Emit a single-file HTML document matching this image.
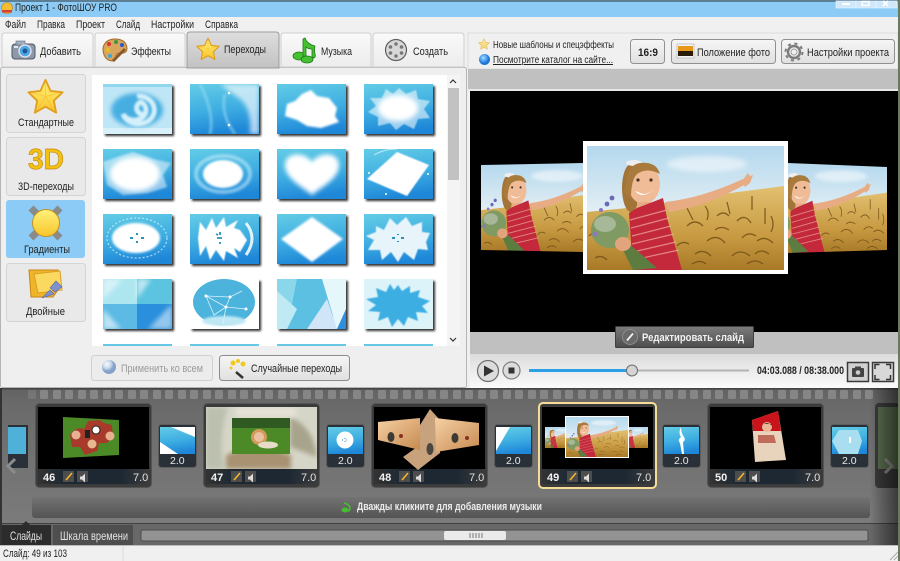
<!DOCTYPE html>
<html><head><meta charset="utf-8"><style>
html,body{margin:0;padding:0;background:#f0f0f0;width:900px;height:561px;overflow:hidden}
svg{display:block}
text{font-family:"Liberation Sans","DejaVu Sans",sans-serif;font-size:11px;fill:#222}
.b{font-weight:bold}
</style></head><body>
<svg width="900" height="561" viewBox="0 0 900 561" xmlns="http://www.w3.org/2000/svg">
<defs>
<linearGradient id="tab" x1="0" y1="0" x2="0" y2="1"><stop offset="0" stop-color="#fafafa"/><stop offset="1" stop-color="#ececec"/></linearGradient>
<linearGradient id="tabA" x1="0" y1="0" x2="0" y2="1"><stop offset="0" stop-color="#dedede"/><stop offset="1" stop-color="#c2c2c2"/></linearGradient>
<linearGradient id="btn" x1="0" y1="0" x2="0" y2="1"><stop offset="0" stop-color="#f6f6f6"/><stop offset="1" stop-color="#e0e0e0"/></linearGradient>
<linearGradient id="blue" x1="0.1" y1="0" x2="0.3" y2="1"><stop offset="0" stop-color="#62cbe6"/><stop offset="0.55" stop-color="#3eaee2"/><stop offset="1" stop-color="#1f87d8"/></linearGradient>
<linearGradient id="gold" x1="0" y1="0" x2="0" y2="1"><stop offset="0" stop-color="#fff27a"/><stop offset="1" stop-color="#f8c52c"/></linearGradient>
<linearGradient id="ctrl" x1="0" y1="0" x2="0" y2="1"><stop offset="0" stop-color="#dcdcdc"/><stop offset="1" stop-color="#fbfbfb"/></linearGradient>
<linearGradient id="edit" x1="0" y1="0" x2="0" y2="1"><stop offset="0" stop-color="#7c7c7c"/><stop offset="1" stop-color="#4c4c4c"/></linearGradient>
<linearGradient id="sky" x1="0" y1="0" x2="0" y2="1"><stop offset="0" stop-color="#b4d8ee"/><stop offset=".6" stop-color="#e8f1f4"/><stop offset="1" stop-color="#eef3f2"/></linearGradient>
<linearGradient id="wheat" x1="0" y1="0" x2="0" y2="1"><stop offset="0" stop-color="#e2c070"/><stop offset=".6" stop-color="#c89a42"/><stop offset="1" stop-color="#a87a28"/></linearGradient>
<linearGradient id="tl" x1="0" y1="0" x2="0" y2="1"><stop offset="0" stop-color="#626262"/><stop offset="0.12" stop-color="#6a6a6a"/><stop offset="1" stop-color="#7b7b7b"/></linearGradient>
<linearGradient id="mus" x1="0" y1="0" x2="0" y2="1"><stop offset="0" stop-color="#737373"/><stop offset="1" stop-color="#545454"/></linearGradient>
<linearGradient id="rgt" x1="0" y1="0" x2="1" y2="0"><stop offset="0" stop-color="#000" stop-opacity="0"/><stop offset="1" stop-color="#000" stop-opacity=".55"/></linearGradient>
<linearGradient id="bar" x1="0" y1="0" x2="1" y2="0"><stop offset="0" stop-color="#333"/><stop offset=".25" stop-color="#1d2833"/><stop offset=".75" stop-color="#1d2833"/><stop offset="1" stop-color="#3c3c3c"/></linearGradient>
<linearGradient id="warm" x1="0" y1="0" x2="1" y2="1"><stop offset="0" stop-color="#f6d0a4"/><stop offset="1" stop-color="#c68a50"/></linearGradient>
<radialGradient id="ball" cx=".35" cy=".3"><stop offset="0" stop-color="#fff"/><stop offset=".6" stop-color="#bcd2e8"/><stop offset="1" stop-color="#6c8fc0"/></radialGradient>
<radialGradient id="globe" cx=".4" cy=".35"><stop offset="0" stop-color="#9fe0ff"/><stop offset="1" stop-color="#1e74d8"/></radialGradient>
<filter id="b1" x="-20%" y="-20%" width="140%" height="140%"><feGaussianBlur stdDeviation="1"/></filter>
<filter id="b2" x="-30%" y="-30%" width="160%" height="160%"><feGaussianBlur stdDeviation="2.4"/></filter>
<filter id="b05"><feGaussianBlur stdDeviation=".45"/></filter>
<clipPath id="tc"><rect width="69" height="50"/></clipPath>
<clipPath id="pc"><rect width="197" height="124"/></clipPath>

<symbol id="star" viewBox="0 0 40 40"><polygon points="20,2 25.5,14 38.5,15.5 29,24.5 31.5,37.5 20,31 8.5,37.5 11,24.5 1.5,15.5 14.5,14" fill="url(#gold)" stroke="#e29f1e" stroke-width="2" stroke-linejoin="round"/><path d="M20 6 20 20 M6 16 20 20 M12 33 20 20 M28 33 20 20 M34 16 20 20" stroke="#f4b92c" stroke-width=".8" opacity=".7"/></symbol>

<symbol id="photo" viewBox="0 0 197 124" preserveAspectRatio="none"><g clip-path="url(#pc)">
<rect width="197" height="124" fill="url(#sky)"/>
<ellipse cx="120" cy="18" rx="40" ry="8" fill="#fff" opacity=".5" filter="url(#b2)"/>
<path d="M0 66 60 60 120 50 197 40V124H0Z" fill="url(#wheat)"/>
<g stroke="#6e4c14" stroke-width="1.300" fill="none" opacity=".8"><path d="M100 80q8-8 16 0M120 95q10-8 18 2M150 75q8-8 14 2M170 95q8-6 16 2M130 70q6-6 12 0M108 108q8-6 16 2M145 110q8-8 18 0M178 62v16M165 50v14M184 70q4 8 0 16M118 60q5 6 2 14M90 100q5-6 12-2M155 92q6-7 14-2M100 62l6 12M140 56l3 12M128 84q6-5 14 0M105 118q8-5 14 0M160 118q8-6 16 0"/><path d="M2 90q6-6 12 0M8 112q6-4 12 2M168 108q6-6 14 0"/></g>
<path d="M78 56 Q115 52 156 33 L159 38 Q120 60 82 66Z" fill="#e8ac84"/>
<path d="M155 35l6-8 2 3 3-1-3 8-5 4Z" fill="#e8ac84"/>
<ellipse cx="44" cy="42" rx="9" ry="24" fill="#a27438"/>
<ellipse cx="47" cy="17" rx="8" ry="3" fill="#eee"/>
<ellipse cx="57" cy="38" rx="16" ry="20" fill="#f0bc98"/>
<path d="M40 30Q44 15 60 17Q70 18 73 28Q60 21 50 28Q44 34 44 52L37 46Z" fill="#a87a3c"/>
<path d="M48 45Q56 54 67 43Q62 48 56 48Z" fill="#fff"/>
<circle cx="51" cy="34" r="1.600" fill="#432"/><circle cx="64" cy="34" r="1.600" fill="#432"/>
<path d="M50 56h14l-3 8H50Z" fill="#e8ac84"/>
<path d="M42 67 50 62 76 52 80 72 95 124H46Z" fill="#c3293a"/>
<g stroke="#f0b0a8" stroke-width="1.200" opacity=".7"><path d="M43 74 80 64M44 82 82 72M45 90 84 80M45 98 87 88M46 106 89 96M46 114 92 104"/></g>
<ellipse cx="23" cy="84" rx="19" ry="18" fill="#7f9a62"/><ellipse cx="18" cy="78" rx="11" ry="8" fill="#a6b898"/><circle cx="20" cy="58" r="2.400" fill="#6a68b8"/><circle cx="25" cy="52" r="2.400" fill="#6a68b8"/><circle cx="8" cy="88" r="2.400" fill="#8a78c0"/><circle cx="14" cy="64" r="2" fill="#8a78c0"/>
<path d="M40 96 70 122 46 124 34 100Z" fill="#5c7c40"/>
<ellipse cx="36" cy="98" rx="8" ry="7" fill="#e2a47c"/>
</g></symbol>

<symbol id="slide" viewBox="0 0 117 85"><rect x=".5" y=".5" width="116" height="84" rx="4" fill="#3b3b3b" stroke="#555"/><rect x="3" y="4" width="111" height="62" fill="#000"/><rect x="3" y="66" width="111" height="15" fill="url(#bar)"/>
<rect x="28" y="68" width="11" height="11" fill="#4d4d4d"/><path d="M31 77 37 70" stroke="#f0b830" stroke-width="1.600"/>
<rect x="42" y="68" width="11" height="11" fill="#4d4d4d"/><path d="M45 73.500h2l3-3v9l-3-3h-2Z" fill="#ddd"/></symbol>

<symbol id="trans" viewBox="0 0 39 44"><rect x=".5" y=".5" width="38" height="43" rx="3" fill="#2a3038" stroke="#5e5e5e"/><rect x="2" y="3" width="35" height="27" fill="url(#blue)"/></symbol>
</defs>

<!-- window -->
<rect width="900" height="561" fill="#f0f0f0"/>
<rect width="900" height="17" fill="#8bcbf5"/>
<rect width="900" height="2" fill="#5d7f96"/>
<circle cx="7" cy="8" r="5.500" fill="#f4bc30" stroke="#c08018" stroke-width=".6"/><rect x="2" y="10" width="10" height="2.500" fill="#d8402c"/>
<text x="15" y="11" textLength="102" lengthAdjust="spacingAndGlyphs">Проект 1 - ФотоШОУ PRO</text>
<g fill="#cfe8fa" stroke="#e8f5ff" stroke-width=".6"><rect x="836" y="1" width="20" height="7"/><rect x="856" y="1" width="20" height="7"/><rect x="876" y="1" width="21" height="7"/></g>
<path d="M842 4h8" stroke="#fff" stroke-width="2"/><rect x="862" y="1.500" width="7" height="4" fill="none" stroke="#fff" stroke-width="1.400"/><path d="M883 1l5 5M888 1l-5 5" stroke="#fff" stroke-width="1.600"/>
<rect y="17" width="900" height="16" fill="#f0f0f0"/>
<g fill="#222">
<text x="5" y="28" textLength="21" lengthAdjust="spacingAndGlyphs">Файл</text>
<text x="37" y="28" textLength="28" lengthAdjust="spacingAndGlyphs">Правка</text>
<text x="76" y="28" textLength="29" lengthAdjust="spacingAndGlyphs">Проект</text>
<text x="116" y="28" textLength="24" lengthAdjust="spacingAndGlyphs">Слайд</text>
<text x="151" y="28" textLength="43" lengthAdjust="spacingAndGlyphs">Настройки</text>
<text x="205" y="28" textLength="33" lengthAdjust="spacingAndGlyphs">Справка</text>
</g>

<!-- left panel -->
<rect x="0.500" y="67.500" width="466" height="320" rx="2" fill="#efefef" stroke="#b4b4b4"/>
<path d="M2 67V36q0-3 3-3h85q3 0 3 3V67Z" fill="url(#tab)" stroke="#cfcfcf"/>
<path d="M95 67V36q0-3 3-3h84q3 0 3 3V67Z" fill="url(#tab)" stroke="#cfcfcf"/>
<path d="M281 67V36q0-3 3-3h84q3 0 3 3V67Z" fill="url(#tab)" stroke="#cfcfcf"/>
<path d="M373 67V36q0-3 3-3h85q3 0 3 3V67Z" fill="url(#tab)" stroke="#cfcfcf"/>
<path d="M187 68V35q0-3 3-3h86q3 0 3 3V68Z" fill="url(#tabA)" stroke="#9c9c9c"/>
<!-- camera -->
<rect x="12" y="44" width="23" height="15" rx="3" fill="#8c9aa8" stroke="#556"/><rect x="16" y="41" width="9" height="4" fill="#9fb0be" stroke="#667" stroke-width=".6"/><circle cx="25" cy="51" r="6" fill="#4ca8e4" stroke="#dde" stroke-width="1.500"/><circle cx="25" cy="51" r="2.500" fill="#1a5a98"/><rect x="14" y="46" width="4" height="2" fill="#dfe8ee"/>
<!-- palette -->
<path d="M103 48q2-9 12-9q11 0 12 9q0 6-7 5q-4 0-4 3q1 5-4 5q-9-1-9-13Z" fill="#d8a55e" stroke="#a06c28"/>
<circle cx="109" cy="44" r="2" fill="#e23030"/><circle cx="116" cy="42" r="2" fill="#3a9a3a"/><circle cx="122" cy="45" r="2" fill="#2a5ad0"/><circle cx="108" cy="50" r="2" fill="#e8c020"/><circle cx="110" cy="56" r="2" fill="#3aa8d8"/>
<path d="M112 60l12-12 2 2-12 12Z" fill="#8a5828"/>
<use href="#star" x="196" y="37" width="24" height="24"/>
<!-- music -->
<g fill="#44c030" stroke="#1e7a18" stroke-width=".8"><ellipse cx="299" cy="56" rx="6" ry="4"/><ellipse cx="307" cy="59.500" rx="6" ry="3.500"/><path d="M303 56V39l2-1q2 6 10 8q-1 3 0 8q1 3-1 4l-2-1V49q-4 0-6-2V56Z"/></g>
<!-- reel -->
<circle cx="396" cy="50" r="10.500" fill="#d8d8d8" stroke="#5e5e5e" stroke-width="1.200"/><g fill="#777"><circle cx="396" cy="44" r="1.800"/><circle cx="396" cy="56" r="1.800"/><circle cx="390.500" cy="47" r="1.800"/><circle cx="401.500" cy="47" r="1.800"/><circle cx="390.500" cy="53" r="1.800"/><circle cx="401.500" cy="53" r="1.800"/></g>
<text x="40" y="55" textLength="41" lengthAdjust="spacingAndGlyphs">Добавить</text>
<text x="131" y="55" textLength="40" lengthAdjust="spacingAndGlyphs">Эффекты</text>
<text x="224" y="53" textLength="42" lengthAdjust="spacingAndGlyphs">Переходы</text>
<text x="321" y="55" textLength="31" lengthAdjust="spacingAndGlyphs">Музыка</text>
<text x="413" y="55" textLength="35" lengthAdjust="spacingAndGlyphs">Создать</text>

<!-- sidebar -->
<rect x="6.500" y="74.500" width="79" height="58" rx="3" fill="#e9e9e9" stroke="#d4d4d4"/>
<rect x="6.500" y="137.500" width="79" height="58" rx="3" fill="#e9e9e9" stroke="#d4d4d4"/>
<rect x="6" y="200" width="79" height="58" rx="3" fill="#8bcbf5"/>
<rect x="6.500" y="263.500" width="79" height="58" rx="3" fill="#e9e9e9" stroke="#d4d4d4"/>
<use href="#star" x="27" y="78" width="37" height="37"/>
<text x="28" y="169" class="b" style="font-size:29px;fill:#f2c212;stroke:#c98a10;stroke-width:.7" textLength="36" lengthAdjust="spacingAndGlyphs">3D</text>
<g><path d="M31 208l8 8M60 208l-8 8M31 238l8-8M60 238l-8-8" stroke="#8a8a8a" stroke-width="7"/><circle cx="46" cy="223" r="13.500" fill="url(#gold)" stroke="#c8901a" stroke-width="1"/></g>
<path d="M29 270H58L60 287 53 297H31Z" fill="#f0b428" stroke="#c8861a"/><path d="M34 274 60 271 62 290 38 293Z" fill="#fbd860" stroke="#d8a028"/><path d="M42 298l8-8 4 4Z M50 288l6-7 6 6-7 5Z" fill="#7f92d0" stroke="#5468a8" stroke-width=".6"/>
<text x="18" y="126" textLength="56" lengthAdjust="spacingAndGlyphs">Стандартные</text>
<text x="18" y="190" textLength="56" lengthAdjust="spacingAndGlyphs">3D-переходы</text>
<text x="24" y="253" textLength="46" lengthAdjust="spacingAndGlyphs">Градиенты</text>
<text x="26" y="315" textLength="39" lengthAdjust="spacingAndGlyphs">Двойные</text>

<!-- grid -->
<rect x="92" y="75" width="368" height="271" fill="#fff"/>
<g fill="#111" filter="url(#b1)" opacity=".85"><rect x="105" y="86" width="69" height="50"/><rect x="192" y="86" width="69" height="50"/><rect x="279" y="86" width="69" height="50"/><rect x="366" y="86" width="69" height="50"/><rect x="105" y="151" width="69" height="50"/><rect x="192" y="151" width="69" height="50"/><rect x="279" y="151" width="69" height="50"/><rect x="366" y="151" width="69" height="50"/><rect x="105" y="216" width="69" height="50"/><rect x="192" y="216" width="69" height="50"/><rect x="279" y="216" width="69" height="50"/><rect x="366" y="216" width="69" height="50"/><rect x="105" y="281" width="69" height="50"/><rect x="192" y="281" width="69" height="50"/><rect x="279" y="281" width="69" height="50"/><rect x="366" y="281" width="69" height="50"/></g>

<!-- row 1 -->
<g transform="translate(103 84)" clip-path="url(#tc)"><rect width="69" height="50" fill="#bfe6f6"/><ellipse cx="34" cy="26" rx="26" ry="17" fill="#46aee2" filter="url(#b2)"/><path d="M34 12a16 14 0 1 1-14 18a12 10 0 1 0 18-12a6 6 0 1 0 4 12" fill="none" stroke="#d4f0fb" stroke-width="5" filter="url(#b1)"/><rect width="69" height="3" fill="#7ccfe8" opacity=".7"/><rect y="44" width="69" height="6" fill="#fff" opacity=".4"/></g>
<g transform="translate(190 84)" clip-path="url(#tc)"><rect width="69" height="50" fill="url(#blue)"/><path d="M30 0H69V50H60Q62 25 50 15Q40 8 30 0Z" fill="#fff" opacity=".65" filter="url(#b2)"/><path d="M10 0Q25 30 20 50M35 10Q30 30 45 50" stroke="#9fe0f4" stroke-width="3" fill="none" opacity=".5" filter="url(#b1)"/><circle cx="39" cy="9" r="1.300" fill="#fff"/><circle cx="39" cy="41" r="1.300" fill="#fff"/></g>
<g transform="translate(277 84)" clip-path="url(#tc)"><rect width="69" height="50" fill="url(#blue)"/><path d="M10 20 18 17 25 10 34 6 40 12 52 14 60 24 58 32 62 38 44 44 30 42 20 36 8 32Z" fill="#fff" filter="url(#b1)"/></g>
<g transform="translate(364 84)" clip-path="url(#tc)"><rect width="69" height="50" fill="url(#blue)"/><path d="M35 4 42 10 52 6 54 15 66 17 60 25 66 34 54 35 50 45 40 40 32 46 26 39 14 42 14 33 4 28 12 22 6 14 18 14 22 5 29 10Z" fill="#fff" opacity=".55" filter="url(#b05)"/><ellipse cx="34" cy="24" rx="20" ry="13" fill="#fff" filter="url(#b2)"/></g>
<!-- row 2 -->
<g transform="translate(103 149)" clip-path="url(#tc)"><rect width="69" height="50" fill="url(#blue)"/><path d="M0 13 14 8 30 3 50 10 68 14 60 26 64 38 45 44 20 46 4 36Z" fill="#fff" opacity=".5" filter="url(#b1)"/><ellipse cx="32" cy="25" rx="25" ry="17" fill="#fff" filter="url(#b2)"/></g>
<g transform="translate(190 149)" clip-path="url(#tc)"><rect width="69" height="50" fill="url(#blue)"/><ellipse cx="33" cy="25" rx="27" ry="18" fill="none" stroke="#d4f2fb" stroke-width="4" opacity=".5" filter="url(#b1)"/><ellipse cx="33" cy="25" rx="20" ry="14" fill="#fff" filter="url(#b1)"/></g>
<g transform="translate(277 149)" clip-path="url(#tc)"><rect width="69" height="50" fill="url(#blue)"/><path d="M35 13C28 2 8 3 8 16C8 30 26 38 35 46C44 38 62 30 62 16C62 3 42 2 35 13Z" fill="#fff" filter="url(#b2)"/></g>
<g transform="translate(364 149)" clip-path="url(#tc)"><rect width="69" height="50" fill="url(#blue)"/><path d="M33 3 65 16 43 47 3 30Z" fill="#fff" filter="url(#b05)"/><path d="M10 6Q20 0 33 0" stroke="#bfeaf7" fill="none"/><circle cx="5" cy="24" r="1" fill="#fff"/><circle cx="64" cy="25" r="1" fill="#fff"/><circle cx="22" cy="45" r="1" fill="#fff"/></g>
<!-- row 3 -->
<g transform="translate(103 214)" clip-path="url(#tc)"><rect width="69" height="50" fill="url(#blue)"/><ellipse cx="34" cy="24" rx="30" ry="20" fill="none" stroke="#e4f7fc" stroke-width="1.200" stroke-dasharray="2 2" opacity=".7"/><ellipse cx="33" cy="24" rx="24" ry="15" fill="#fff" filter="url(#b1)"/><path d="M34 19v2M34 27v2M27 24h3M38 24h3" stroke="#2c90b8" stroke-width="2"/></g>
<g transform="translate(190 214)" clip-path="url(#tc)"><rect width="69" height="50" fill="url(#blue)"/><path d="M8 24 10 8 16 16 22 4 26 14 34 3 36 13 48 6 44 14 50 16 57 26 50 38 44 34 48 44 36 37 34 47 26 36 20 46 16 32 10 42Z" fill="#fff" filter="url(#b05)"/><path d="M56 9Q68 24 56 41" stroke="#fff" stroke-width="3" fill="none" opacity=".85"/><path d="M27 24h5M26 20l2 1M30 18v3M30 28v2" stroke="#2c90b8" stroke-width="1.800"/></g>
<g transform="translate(277 214)" clip-path="url(#tc)"><rect width="69" height="50" fill="url(#blue)"/><path d="M35 3 66 25 35 48 4 25Z" fill="#fff" filter="url(#b1)"/></g>
<g transform="translate(364 214)" clip-path="url(#tc)"><rect width="69" height="50" fill="url(#blue)"/><path d="M12 12 20 16 26 4 33 11 42 3 48 12 58 8 58 18 66 19 62 28 64 36 54 35 50 46 40 38 34 48 27 38 18 46 16 36 4 36 10 26 2 22 12 18Z" fill="#e7f5fb" filter="url(#b05)"/><path d="M34 20v1M34 27v1M28 24h3M37 24h3" stroke="#2c90b8" stroke-width="2"/></g>
<!-- row 4 -->
<g transform="translate(103 279)" clip-path="url(#tc)"><rect width="34" height="25" fill="#aee6f0"/><rect x="34" width="35" height="25" fill="#5cc4e0"/><rect y="25" width="34" height="25" fill="#5cbae4"/><rect x="34" y="25" width="35" height="25" fill="#2a8fdc"/><path d="M0 0H20L0 20ZM69 25V50H45Z" fill="#fff" opacity=".5" filter="url(#b2)"/><path d="M0 50V30L18 50ZM34 0 34 20 48 0Z" fill="#fff" opacity=".6" filter="url(#b2)"/></g>
<g transform="translate(190 279)" clip-path="url(#tc)"><rect width="69" height="50" fill="#fff"/><ellipse cx="34" cy="23" rx="31" ry="23" fill="#4cb4dc"/><ellipse cx="34" cy="42" rx="22" ry="5" fill="#bfe8f4" filter="url(#b1)"/><path d="M16 17 40 18 52 12M16 17 36 28 56 30M36 28 33 45M40 18 36 28M16 17 24 36 36 28" stroke="#d8f2fb" fill="none" stroke-width=".8"/><g fill="#fff"><circle cx="16" cy="17" r="1.500"/><circle cx="40" cy="18" r="1.500"/><circle cx="36" cy="28" r="1.500"/><circle cx="56" cy="30" r="1.500"/></g></g>
<g transform="translate(277 279)" clip-path="url(#tc)"><rect width="69" height="50" fill="#d5f0f8"/><path d="M0 0H69V5L50 50H0Z" fill="#8ad6ea"/><path d="M20 0H50L58 50H10Z" fill="#5cc0e2"/><path d="M45 0H69V50H60Z" fill="#e6f7fb"/><path d="M0 12 20 30 10 50H0Z" fill="#bfeaf4"/><path d="M30 50 50 20 60 50Z" fill="#d0e6f8"/><path d="M60 50 69 30V50Z" fill="#2e90dc"/></g>
<g transform="translate(364 279)" clip-path="url(#tc)"><rect width="69" height="50" fill="#ddf3fa"/><path d="M34 6 38 12 46 7 46 14 56 11 54 18 66 22 58 27 64 34 52 33 54 42 44 38 40 47 34 40 28 48 24 38 14 42 16 33 4 32 12 26 2 20 14 18 12 9 22 13 26 5 30 11Z" fill="#3eaee2" filter="url(#b05)"/></g>
<!-- row 5 clipped -->
<g fill="#66c8e4"><rect x="103" y="344" width="69" height="2"/><rect x="190" y="344" width="69" height="2"/><rect x="277" y="344" width="69" height="2"/><rect x="364" y="344" width="69" height="2"/></g>

<!-- scrollbar -->
<rect x="447" y="75" width="13" height="271" fill="#f4f4f4"/>
<rect x="448" y="88" width="11" height="92" fill="#c2c2c2"/>
<path d="M450 83l3-3 3 3M450 338l3 3 3-3" fill="none" stroke="#333" stroke-width="1.200"/>

<!-- apply buttons -->
<rect x="91.500" y="355.500" width="121" height="25" rx="3" fill="#ececec" stroke="#cfcfcf"/>
<rect x="219.500" y="355.500" width="130" height="25" rx="3" fill="url(#btn)" stroke="#8c8c8c"/>
<circle cx="109" cy="367" r="7" fill="url(#ball)" opacity=".8"/>
<text x="121" y="372" style="fill:#9a9a9a" textLength="82" lengthAdjust="spacingAndGlyphs">Применить ко всем</text>
<g><path d="M236 372l7 6" stroke="#333" stroke-width="2.500"/><circle cx="233" cy="363" r="2.500" fill="#f2c820"/><circle cx="238" cy="361" r="2" fill="#f2c820"/><circle cx="243" cy="364" r="2.500" fill="#f2c820"/><circle cx="231" cy="368" r="1.500" fill="#f2c820"/></g>
<text x="251" y="372" textLength="91" lengthAdjust="spacingAndGlyphs">Случайные переходы</text>

<!-- right top -->
<rect x="468" y="33" width="430" height="36" fill="#f0f0f0" stroke="#dcdcdc"/>
<rect x="468" y="69" width="430" height="20" fill="#c0c0c0"/>
<rect x="468" y="89" width="430" height="2" fill="#e8e8e8"/>
<use href="#star" x="478" y="38" width="12" height="12" opacity=".65"/>
<circle cx="484.500" cy="59.500" r="5.500" fill="url(#globe)"/>
<text x="493" y="48" style="font-size:10px" textLength="121" lengthAdjust="spacingAndGlyphs">Новые шаблоны и спецэффекты</text>
<text x="493" y="63" style="font-size:10px" text-decoration="underline" textLength="120" lengthAdjust="spacingAndGlyphs">Посмотрите каталог на сайте...</text>
<rect x="630.500" y="39.500" width="34" height="24" rx="3" fill="url(#btn)" stroke="#909090"/>
<rect x="671.500" y="39.500" width="104" height="24" rx="3" fill="url(#btn)" stroke="#909090"/>
<rect x="781.500" y="39.500" width="113" height="24" rx="3" fill="url(#btn)" stroke="#909090"/>
<text x="638" y="56" class="b" textLength="20" lengthAdjust="spacingAndGlyphs">16:9</text>
<rect x="677" y="44" width="17" height="14" fill="#f4f4f4" stroke="#aaa" stroke-width=".6"/><rect x="678" y="46" width="15" height="5" fill="#e89818"/><rect x="678" y="51" width="15" height="5" fill="#2a1a08"/>
<text x="697" y="56" textLength="73" lengthAdjust="spacingAndGlyphs">Положение фото</text>
<circle cx="794" cy="52" r="6" fill="none" stroke="#7c7c7c" stroke-width="2.400"/><circle cx="794" cy="52" r="8.500" fill="none" stroke="#7c7c7c" stroke-width="2" stroke-dasharray="3 3.700"/><circle cx="794" cy="52" r="3" fill="#f0f0f0" stroke="#888" stroke-width=".7"/>
<text x="807" y="56" textLength="82" lengthAdjust="spacingAndGlyphs">Настройки проекта</text>

<!-- preview -->
<rect x="470" y="91" width="428" height="241" fill="#000"/>
<svg x="481" y="163" width="102" height="89" viewBox="0 0 102 89"><use href="#photo" x="-2" y="0" width="128" height="89"/></svg>
<svg x="788" y="163" width="99" height="90" viewBox="0 0 99 90"><use href="#photo" x="-25" y="0" width="128" height="90"/></svg>
<path d="M481 163H583L481 165Z" fill="#000"/><path d="M481 250 583 252H481Z" fill="#000"/>
<path d="M788 163H887V167Z" fill="#000"/><path d="M788 253H887V250Z" fill="#000"/>
<rect x="583" y="141" width="205" height="133" fill="#fff"/>
<use href="#photo" x="587" y="146" width="197" height="124"/>

<!-- controls -->
<rect x="470" y="332" width="428" height="22" fill="#c0c0c0"/>
<rect x="470" y="354" width="428" height="34" fill="url(#ctrl)"/>
<rect x="615.500" y="326.500" width="138" height="21" rx="1" fill="url(#edit)" stroke="#3f3f3f"/>
<circle cx="630" cy="337" r="7.500" fill="#6a6a6a" stroke="#999" stroke-width=".7"/><path d="M627 340.500 633 333.500" stroke="#f2f2f2" stroke-width="1.800"/>
<text x="642" y="341" class="b" style="fill:#f2f2f2" textLength="102" lengthAdjust="spacingAndGlyphs">Редактировать слайд</text>
<circle cx="488" cy="371" r="10.500" fill="#dcdcdc" stroke="#6e6e6e" stroke-width="1.200"/><path d="M484 365.500 494 371 484 376.500Z" fill="#333"/>
<circle cx="511.500" cy="370.500" r="8.500" fill="#dcdcdc" stroke="#7e7e7e" stroke-width="1.200"/><rect x="508.500" y="367.500" width="6" height="6" fill="#333"/>
<rect x="529" y="369.500" width="220" height="2" fill="#b4b4b4"/>
<rect x="529" y="369" width="103" height="3" fill="#2ba0e6"/>
<circle cx="632" cy="370.500" r="5.500" fill="#d4d4d4" stroke="#6c6c6c"/>
<text x="757" y="374" class="b" textLength="87" lengthAdjust="spacingAndGlyphs">04:03.088 / 08:38.000</text>
<rect x="847.500" y="362.500" width="21" height="19" fill="#d0d0d0" stroke="#3a3a3a" stroke-width="1.500"/>
<rect x="852" y="368" width="12" height="9" rx="1" fill="#444"/><rect x="855" y="366.500" width="6" height="2" fill="#444"/><circle cx="858" cy="372.500" r="2.300" fill="#ccc"/>
<rect x="872.500" y="362.500" width="21" height="19" fill="#d8d8d8" stroke="#3a3a3a" stroke-width="1.500"/>
<path d="M875 369v-4.500h4.500M886 364.500h4.500v4.500M890.500 375v4.500H886M879.500 379.500H875V375" fill="none" stroke="#333" stroke-width="1.500"/>

<!-- timeline -->
<rect y="388" width="900" height="136" fill="url(#tl)"/>
<rect y="388" width="900" height="1.500" fill="#444"/>
<g fill="#868686"><rect x="28" y="390" width="8" height="9" rx="1.500" opacity=".5"/><rect x="40" y="390" width="8" height="9" rx="1.500"/><rect x="53" y="390" width="8" height="9" rx="1.500"/><rect x="65" y="390" width="8" height="9" rx="1.500"/><rect x="78" y="390" width="8" height="9" rx="1.500"/><rect x="90" y="390" width="8" height="9" rx="1.500"/><rect x="103" y="390" width="8" height="9" rx="1.500"/><rect x="115" y="390" width="8" height="9" rx="1.500"/><rect x="128" y="390" width="8" height="9" rx="1.500"/><rect x="140" y="390" width="8" height="9" rx="1.500"/><rect x="153" y="390" width="8" height="9" rx="1.500"/><rect x="165" y="390" width="8" height="9" rx="1.500"/><rect x="178" y="390" width="8" height="9" rx="1.500"/><rect x="190" y="390" width="8" height="9" rx="1.500"/><rect x="203" y="390" width="8" height="9" rx="1.500"/><rect x="215" y="390" width="8" height="9" rx="1.500"/><rect x="228" y="390" width="8" height="9" rx="1.500"/><rect x="240" y="390" width="8" height="9" rx="1.500"/><rect x="253" y="390" width="8" height="9" rx="1.500"/><rect x="265" y="390" width="8" height="9" rx="1.500"/><rect x="278" y="390" width="8" height="9" rx="1.500"/><rect x="290" y="390" width="8" height="9" rx="1.500"/><rect x="303" y="390" width="8" height="9" rx="1.500"/><rect x="315" y="390" width="8" height="9" rx="1.500"/><rect x="328" y="390" width="8" height="9" rx="1.500"/><rect x="340" y="390" width="8" height="9" rx="1.500"/><rect x="353" y="390" width="8" height="9" rx="1.500"/><rect x="365" y="390" width="8" height="9" rx="1.500"/><rect x="378" y="390" width="8" height="9" rx="1.500"/><rect x="390" y="390" width="8" height="9" rx="1.500"/><rect x="403" y="390" width="8" height="9" rx="1.500"/><rect x="415" y="390" width="8" height="9" rx="1.500"/><rect x="428" y="390" width="8" height="9" rx="1.500"/><rect x="440" y="390" width="8" height="9" rx="1.500"/><rect x="453" y="390" width="8" height="9" rx="1.500"/><rect x="465" y="390" width="8" height="9" rx="1.500"/><rect x="478" y="390" width="8" height="9" rx="1.500"/><rect x="490" y="390" width="8" height="9" rx="1.500"/><rect x="503" y="390" width="8" height="9" rx="1.500"/><rect x="515" y="390" width="8" height="9" rx="1.500"/><rect x="528" y="390" width="8" height="9" rx="1.500"/><rect x="540" y="390" width="8" height="9" rx="1.500"/><rect x="553" y="390" width="8" height="9" rx="1.500"/><rect x="565" y="390" width="8" height="9" rx="1.500"/><rect x="578" y="390" width="8" height="9" rx="1.500"/><rect x="590" y="390" width="8" height="9" rx="1.500"/><rect x="603" y="390" width="8" height="9" rx="1.500"/><rect x="615" y="390" width="8" height="9" rx="1.500"/><rect x="628" y="390" width="8" height="9" rx="1.500"/><rect x="640" y="390" width="8" height="9" rx="1.500"/><rect x="653" y="390" width="8" height="9" rx="1.500"/><rect x="665" y="390" width="8" height="9" rx="1.500"/><rect x="678" y="390" width="8" height="9" rx="1.500"/><rect x="690" y="390" width="8" height="9" rx="1.500"/><rect x="703" y="390" width="8" height="9" rx="1.500"/><rect x="715" y="390" width="8" height="9" rx="1.500"/><rect x="728" y="390" width="8" height="9" rx="1.500"/><rect x="740" y="390" width="8" height="9" rx="1.500"/><rect x="753" y="390" width="8" height="9" rx="1.500"/><rect x="765" y="390" width="8" height="9" rx="1.500"/><rect x="778" y="390" width="8" height="9" rx="1.500"/><rect x="790" y="390" width="8" height="9" rx="1.500"/><rect x="803" y="390" width="8" height="9" rx="1.500"/><rect x="815" y="390" width="8" height="9" rx="1.500"/><rect x="828" y="390" width="8" height="9" rx="1.500"/><rect x="840" y="390" width="8" height="9" rx="1.500"/><rect x="853" y="390" width="8" height="9" rx="1.500"/><rect x="865" y="390" width="8" height="9" rx="1.500"/></g>

<!-- partial left transition -->
<rect x="8" y="425" width="20" height="43" fill="#2a3038"/><rect x="8" y="427" width="18" height="27" fill="#4fb0d8"/>
<!-- slides -->
<use href="#slide" x="35" y="403" width="117" height="85"/>
<use href="#slide" x="203" y="403" width="117" height="85"/>
<use href="#slide" x="371" y="403" width="117" height="85"/>
<use href="#slide" x="539" y="403" width="117" height="85"/>
<rect x="539" y="403" width="117" height="85" rx="4" fill="none" stroke="#f6dc98" stroke-width="2"/>
<use href="#slide" x="707" y="403" width="117" height="85"/>
<rect x="875" y="403" width="25" height="85" rx="4" fill="#3b3b3b"/><rect x="878" y="407" width="22" height="62" fill="#5c7050"/>

<!-- slide 46 -->
<path d="M63 417 119 420V455L63 458Z" fill="#4c8a28"/>
<path d="M70 435q6-9 14-6l4-8 12-1 4 3 8 2 1 12-6 6-8 0-2 8-12 4-5-8-8 0Z" fill="#a83a2c"/>
<circle cx="76" cy="435" r="4.500" fill="#e8b090"/><circle cx="110" cy="436" r="4.500" fill="#e8b090"/><circle cx="92" cy="444" r="4.500" fill="#e8b890"/>
<circle cx="96" cy="430" r="4" fill="#fff" stroke="#222"/><path d="M85 430h5v8h-5Z" fill="#222"/>
<!-- slide 47 -->
<svg x="206" y="407" width="111" height="62" viewBox="0 0 111 62"><rect width="111" height="62" fill="#d6d6c8"/><path d="M0 0H22Q12 30 18 62H0Z" fill="#bcc0ae" filter="url(#b2)"/><path d="M84 10Q108 20 111 50L84 40Z" fill="#a8a48c" filter="url(#b2)"/><path d="M20 48Q50 34 85 48V62H20Z" fill="#a89272" filter="url(#b2)"/><path d="M30 0H90V10H30Z" fill="#e6e2d6" filter="url(#b2)"/></svg>
<rect x="232" y="418" width="58" height="36" fill="#4c8a28"/><rect x="232" y="418" width="58" height="10" fill="#2f5a22"/><circle cx="259" cy="437" r="8" fill="#d09a58"/><circle cx="259" cy="437" r="5" fill="#eac0a0"/><ellipse cx="268" cy="445" rx="10" ry="3.500" fill="#e6dcc8"/>
<!-- slide 48 -->
<path d="M430 409 440 420 440 453 418 470 403 457 420 445 420 425Z" fill="#c8a27c"/>
<path d="M378 422 420 418 420 450 378 440Z" fill="url(#warm)"/>
<path d="M435 418 479 423V445L436 452Z" fill="url(#warm)"/>
<ellipse cx="391" cy="437" rx="3.500" ry="5" fill="#3e3a34"/><circle cx="401" cy="436" r="2" fill="#8a3020"/><ellipse cx="455" cy="438" rx="3.500" ry="5" fill="#3e3a34"/><circle cx="467" cy="438" r="2" fill="#8a3020"/><ellipse cx="430" cy="449" rx="3.500" ry="6" fill="#4a4640"/>
<!-- slide 49 -->
<svg x="545" y="427" width="20" height="21" viewBox="0 0 20 21"><use href="#photo" width="26" height="21"/></svg>
<svg x="629" y="427" width="19" height="21" viewBox="0 0 19 21"><use href="#photo" x="-6" width="25" height="21"/></svg>
<rect x="565" y="416" width="64" height="42" fill="#fff"/>
<use href="#photo" x="566" y="417" width="62" height="40"/>
<!-- slide 50 -->
<path d="M752 420 778 411 786 460 755 462Z" fill="#e8d4bc"/><path d="M752 420 778 411 781 431 753 431Z" fill="#c8141a"/><circle cx="767" cy="427" r="5" fill="#e8b898"/><path d="M762 427q4-8 11 0l-2-3h-7Z" fill="#5a3820"/><path d="M758 435h16l2 8h-18Z" fill="#b04030" opacity=".7"/>

<!-- numbers -->
<text x="43" y="481" class="b" style="fill:#f2f2f2;font-size:11px">46</text>
<text x="211" y="481" class="b" style="fill:#f2f2f2;font-size:11px">47</text>
<text x="379" y="481" class="b" style="fill:#f2f2f2;font-size:11px">48</text>
<text x="547" y="481" class="b" style="fill:#f2f2f2;font-size:11px">49</text>
<text x="715" y="481" class="b" style="fill:#f2f2f2;font-size:11px">50</text>
<text x="133" y="481" style="fill:#e2e2e2;font-size:11px">7.0</text>
<text x="301" y="481" style="fill:#e2e2e2;font-size:11px">7.0</text>
<text x="469" y="481" style="fill:#e2e2e2;font-size:11px">7.0</text>
<text x="636" y="481" style="fill:#e2e2e2;font-size:11px">7.0</text>
<text x="805" y="481" style="fill:#e2e2e2;font-size:11px">7.0</text>

<!-- transitions -->
<use href="#trans" x="158" y="424" width="39" height="44"/>
<use href="#trans" x="326" y="424" width="39" height="44"/>
<use href="#trans" x="494" y="424" width="39" height="44"/>
<use href="#trans" x="662" y="424" width="39" height="44"/>
<use href="#trans" x="830" y="424" width="39" height="44"/>
<path d="M171 427H195V437ZM160 442 178 454H160Z" fill="#fff"/>
<circle cx="345" cy="440" r="8.500" fill="#fff"/><path d="M345 438v1M345 441v1M342 440h1M346 440h1" stroke="#2c90b8"/>
<path d="M496 427H510L496 451Z" fill="#fff"/>
<path d="M681 427q-3 6 0 10q-4 3-1 6l2 11h2l-1-12q3-2 1-5q-3-4-3-10Z" fill="#fff"/>
<path d="M839 430H858L862 441 858 454H839L832 441Z" fill="#a8def0"/><rect x="849" y="437" width="2" height="6" fill="#fff"/>
<text x="170" y="464" style="fill:#e8e8e8;font-size:10.500px">2.0</text>
<text x="338" y="464" style="fill:#e8e8e8;font-size:10.500px">2.0</text>
<text x="506" y="464" style="fill:#e8e8e8;font-size:10.500px">2.0</text>
<text x="674" y="464" style="fill:#e8e8e8;font-size:10.500px">2.0</text>
<text x="842" y="464" style="fill:#e8e8e8;font-size:10.500px">2.0</text>

<!-- arrows -->
<path d="M15 459 8 466 15 473" fill="none" stroke="#8c8c8c" stroke-width="3"/>
<path d="M885 459 892 466 885 473" fill="none" stroke="#8c8c8c" stroke-width="3"/>
<!-- music bar -->
<rect x="32" y="497" width="838" height="21" rx="3" fill="url(#mus)"/>
<rect x="0" y="523" width="900" height="1.500" fill="#404040"/>
<ellipse cx="345" cy="510" rx="3.500" ry="2.500" fill="#44c030"/><path d="M344 503q5 1 6 5q0 3-2 3" fill="none" stroke="#44c030" stroke-width="1.500"/>
<text x="357" y="510" class="b" style="fill:#ececec" textLength="185" lengthAdjust="spacingAndGlyphs">Дважды кликните для добавления музыки</text>
<!-- bottom -->
<rect y="524" width="900" height="22" fill="#686868"/>
<rect x="0" y="525" width="51" height="21" fill="#2c2c2c"/>
<rect x="53" y="525" width="80" height="21" fill="#4e4e4e"/>
<text x="10" y="540" style="fill:#e4e4e4;font-size:12px" textLength="32" lengthAdjust="spacingAndGlyphs">Слайды</text>
<text x="60" y="540" style="fill:#e4e4e4;font-size:12px" textLength="68" lengthAdjust="spacingAndGlyphs">Шкала времени</text>
<path d="M22 525 26 521 30 525Z" fill="#2c2c2c"/>
<rect x="141" y="530" width="727" height="11" rx="2" fill="#939393" stroke="#4e4e4e"/>
<rect x="444" y="531" width="62" height="9" rx="2" fill="#eaeaea"/>
<path d="M470 533v5M473 533v5M476 533v5M479 533v5M482 533v5" stroke="#777"/>
<rect x="870" y="388" width="30" height="158" fill="url(#rgt)"/>
<rect x="0" y="388" width="2" height="158" fill="#333"/>
<rect y="545" width="900" height="16" fill="#f0f0f0"/>
<rect y="545" width="900" height="1" fill="#bcbcbc"/>
<path d="M123 546v15" stroke="#dcdcdc"/>
<text x="3" y="557" textLength="64" lengthAdjust="spacingAndGlyphs">Слайд: 49 из 103</text>
<path d="M890 560l8-8M894 560l4-4" stroke="#aaa"/>
<rect x="898" y="0" width="2" height="561" fill="#6a7a5e"/>
</svg>
</body></html>
